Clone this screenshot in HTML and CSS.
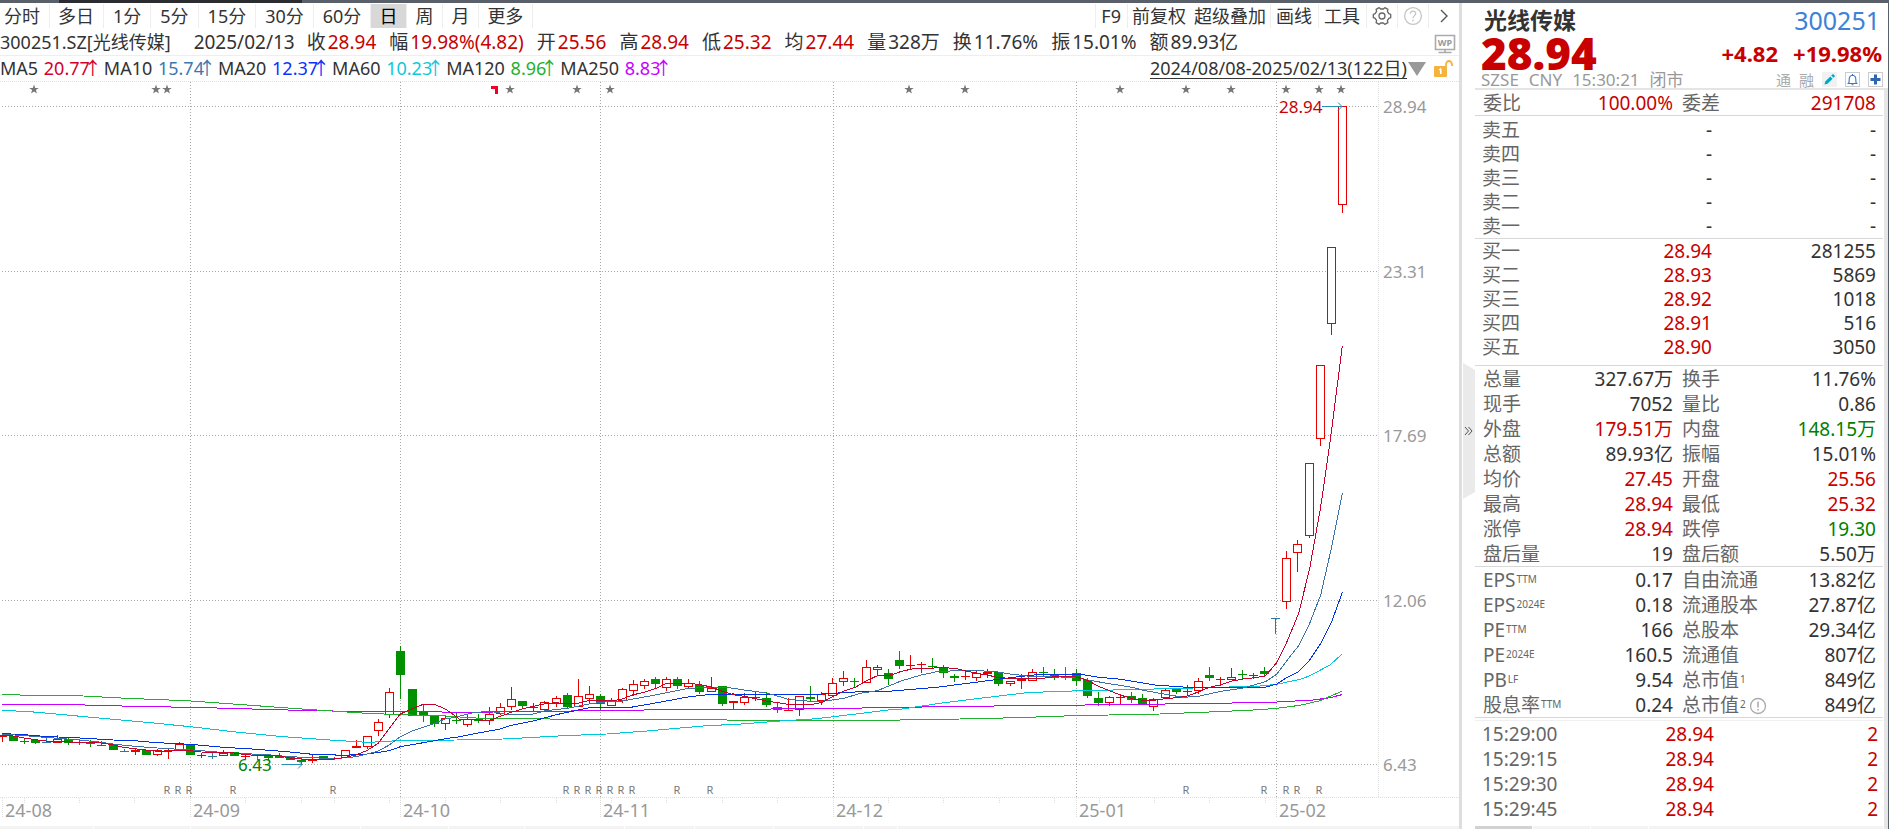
FILE: index.html
```html
<!DOCTYPE html>
<html lang="zh-CN">
<head>
<meta charset="utf-8">
<title>光线传媒 300251</title>
<link rel="stylesheet" href="styles.css">
</head>
<body>
<div class="topbar"><span class="topbar-tab"></span></div>
<div class="app">
  <main class="main">
    <nav class="toolbar">
      <div class="periods">
        <button class="tab">分时</button><button class="tab">多日</button><button class="tab wide">1分</button><button class="tab wide">5分</button><button class="tab wide">15分</button><button class="tab wide">30分</button><button class="tab wide">60分</button><button class="tab active">日</button><button class="tab">周</button><button class="tab">月</button><button class="tab">更多</button>
      </div>
      <div class="tools">
        <button class="tool">F9</button><button class="tool snug">前复权</button><button class="tool snug plain">超级叠加</button><button class="tool">画线</button><button class="tool">工具</button>
        <button class="tool icon" aria-label="设置"><svg width="20" height="20" viewBox="0 0 20 20" fill="none" stroke="#666" stroke-width="1.3" stroke-linejoin="round"><path d="M7.2 1.6 L8.6 3 H11.4 L12.8 1.6 L15.9 3.4 L15.4 5.4 L16.8 7.7 L18.7 8.3 V11.7 L16.8 12.3 L15.4 14.6 L15.9 16.6 L12.8 18.4 L11.4 17 H8.6 L7.2 18.4 L4.1 16.6 L4.6 14.6 L3.2 12.3 L1.3 11.7 V8.3 L3.2 7.7 L4.6 5.4 L4.1 3.4 Z"/><circle cx="10" cy="10" r="3"/></svg></button>
        <button class="tool icon" aria-label="帮助"><svg width="20" height="20" viewBox="0 0 20 20" fill="none" stroke="#c4c4c4" stroke-width="1.3"><circle cx="10" cy="10" r="8.4"/><path d="M7.3 7.8 C7.3 4.2 12.7 4.2 12.7 7.5 C12.7 9.7 10 9.6 10 12.2 M10 13.8 V15.4"/></svg></button>
        <button class="tool icon" aria-label="更多工具"><svg width="12" height="16" viewBox="0 0 12 16" fill="none" stroke="#555" stroke-width="1.4"><path d="M3 2 L9 8 L3 14"/></svg></button>
      </div>
    </nav>

    <div class="quote">
      <span class="sym">300251.SZ[光线传媒]</span>
      <span class="date">2025/02/13</span>
      <span class="pair">收<b class="up">28.94</b></span>
      <span class="pair">幅<b class="up">19.98%(4.82)</b></span>
      <span class="pair">开<b class="up">25.56</b></span>
      <span class="pair">高<b class="up">28.94</b></span>
      <span class="pair">低<b class="up">25.32</b></span>
      <span class="pair">均<b class="up">27.44</b></span>
      <span class="pair">量<b>328万</b></span>
      <span class="pair">换<b>11.76%</b></span>
      <span class="pair">振<b>15.01%</b></span>
      <span class="pair">额<b>89.93亿</b></span>
      <svg class="wp" width="22" height="20" viewBox="0 0 22 20"><path d="M1.500 1.500 H20.500 V15.500 H1.500 Z M11 15.500 V18 M4.500 18.500 H17.500" fill="none" stroke="#aaa" stroke-width="1.600"/><text x="11" y="12" text-anchor="middle" class="wp-text">WP</text></svg>
    </div>

    <div class="averages">
      <span class="ma">MA5 <b class="ma5">20.77<i>↑</i></b></span>
      <span class="ma">MA10 <b class="ma10">15.74<i>↑</i></b></span>
      <span class="ma">MA20 <b class="ma20">12.37<i>↑</i></b></span>
      <span class="ma">MA60 <b class="ma60">10.23<i>↑</i></b></span>
      <span class="ma">MA120 <b class="ma120">8.96<i>↑</i></b></span>
      <span class="ma">MA250 <b class="ma250">8.83<i>↑</i></b></span>
      <a class="range" href="#">2024/08/08-2025/02/13(122日)</a>
      <svg class="drop" width="18" height="16" viewBox="0 0 18 16"><path d="M0 1 H18 L9 15 Z" fill="#999"/></svg>
      <svg class="lock" width="20" height="18" viewBox="0 0 20 18"><rect x="0" y="6" width="13" height="11" rx="1" fill="#f5b23c"/><path d="M12 6 V4.500 A3 3.500 0 0 1 18 4.500 V6" fill="none" stroke="#f5b23c" stroke-width="1.800"/><path d="M5 9.500 H7 V14 M5.500 10 L6.500 9 V14" fill="none" stroke="#fff" stroke-width="1.200"/></svg>
    </div>

    <svg id="chart" class="chart" viewBox="0 81 1459 745" role="img" aria-label="日K线图"></svg>

    <div class="strip">
      <i class="s93"></i><i class="s96"></i><i class="s169"></i><i class="s87"></i><i class="s75"></i><i class="s99"></i><i class="s69"></i><i class="s78"></i><i class="s89"></i><i class="s33"></i><i class="rest"></i>
    </div>
  </main>

  <aside class="panel">
    <button class="handle" aria-label="收起"><svg width="12" height="136" viewBox="0 0 12 136"><path d="M0 0 L12 7 V129 L0 136 Z" fill="#eaeaea"/><path d="M2 64 L5.500 68 L2 72 M5.500 64 L9 68 L5.500 72" fill="none" stroke="#555"/></svg></button>
    <div class="content">
      <header class="head">
        <div class="row-name"><h1>光线传媒</h1><a class="code" href="#">300251</a></div>
        <div class="row-price"><strong class="price">28.94</strong><span class="chg">+4.82</span><span class="chg">+19.98%</span></div>
        <div class="row-meta">
          <span>SZSE</span><span>CNY</span><span>15:30:21</span><span>闭市</span>
          <span class="flags">
            <em>通</em><em>融</em>
            <button class="mini" aria-label="编辑"><svg width="15" height="15" viewBox="0 0 15 15"><rect width="15" height="15" fill="#f1f1f1"/><path d="M2.500 12.500 L3.200 9.500 L8.300 4.400 L10.600 6.700 L5.500 11.800 Z M9.200 3.500 L10.300 2.400 Q11 1.900 11.700 2.600 L12.400 3.300 Q13.100 4 12.600 4.700 L11.500 5.800 Z" fill="#00a8c8"/></svg></button>
            <button class="mini" aria-label="提醒"><svg width="15" height="15" viewBox="0 0 15 15"><rect x=".5" y=".5" width="14" height="14" fill="#fff" stroke="#ccc"/><path d="M2.500 11.500 H12.500 M3.700 11.300 Q4.300 9.800 4.200 7 Q4.300 3.600 7.500 3.200 Q10.700 3.600 10.800 7 Q10.700 9.800 11.300 11.300 M6.500 12.800 H8.500 M7.500 2 V3.200" fill="none" stroke="#3c78c8" stroke-width="1.100"/></svg></button>
            <button class="mini" aria-label="添加"><svg width="15" height="15" viewBox="0 0 15 15"><rect x=".5" y=".5" width="14" height="14" fill="#fff" stroke="#ccc"/><path d="M7.500 2.500 V12.500 M2.500 7.500 H12.500" stroke="#2f66b4" stroke-width="3"/></svg></button>
          </span>
        </div>
      </header>
      <div class="below">
      <div class="tables">
        <table class="stats">
          <tr><th>委比</th><td class="up">100.00%</td><th>委差</th><td class="up">291708</td></tr>
        </table>
        <table class="book asks">
          <tr><th>卖五</th><td>-</td><td>-</td></tr>
          <tr><th>卖四</th><td>-</td><td>-</td></tr>
          <tr><th>卖三</th><td>-</td><td>-</td></tr>
          <tr><th>卖二</th><td>-</td><td>-</td></tr>
          <tr><th>卖一</th><td>-</td><td>-</td></tr>
        </table>
        <table class="book bids">
          <tr><th>买一</th><td class="up">28.94</td><td>281255</td></tr>
          <tr><th>买二</th><td class="up">28.93</td><td>5869</td></tr>
          <tr><th>买三</th><td class="up">28.92</td><td>1018</td></tr>
          <tr><th>买四</th><td class="up">28.91</td><td>516</td></tr>
          <tr><th>买五</th><td class="up">28.90</td><td>3050</td></tr>
        </table>
        <table class="stats">
          <tr><th>总量</th><td>327.67万</td><th>换手</th><td>11.76%</td></tr>
          <tr><th>现手</th><td>7052</td><th>量比</th><td>0.86</td></tr>
          <tr><th>外盘</th><td class="up">179.51万</td><th>内盘</th><td class="down">148.15万</td></tr>
          <tr><th>总额</th><td>89.93亿</td><th>振幅</th><td>15.01%</td></tr>
          <tr><th>均价</th><td class="up">27.45</td><th>开盘</th><td class="up">25.56</td></tr>
          <tr><th>最高</th><td class="up">28.94</td><th>最低</th><td class="up">25.32</td></tr>
          <tr><th>涨停</th><td class="up">28.94</td><th>跌停</th><td class="down">19.30</td></tr>
          <tr><th>盘后量</th><td>19</td><th>盘后额</th><td>5.50万</td></tr>
        </table>
        <table class="stats">
          <tr><th>EPS<small>TTM</small></th><td>0.17</td><th>自由流通</th><td>13.82亿</td></tr>
          <tr><th>EPS<small>2024E</small></th><td>0.18</td><th>流通股本</th><td>27.87亿</td></tr>
          <tr><th>PE<small>TTM</small></th><td>166</td><th>总股本</th><td>29.34亿</td></tr>
          <tr><th>PE<small>2024E</small></th><td>160.5</td><th>流通值</th><td>807亿</td></tr>
          <tr><th>PB<small>LF</small></th><td>9.54</td><th>总市值<small>1</small></th><td>849亿</td></tr>
          <tr><th>股息率<small>TTM</small></th><td>0.24</td><th>总市值<small>2</small><svg class="info" width="18" height="18" viewBox="0 0 18 18"><circle cx="9" cy="9" r="7.500" fill="none" stroke="#aaa" stroke-width="1.300"/><path d="M9 4.500 V10.500 M9 12 V13.600" stroke="#aaa" stroke-width="1.500"/></svg></th><td>849亿</td></tr>
        </table>
        <table class="book trades">
          <tr><th>15:29:00</th><td class="up">28.94</td><td class="up">2</td></tr>
          <tr><th>15:29:15</th><td class="up">28.94</td><td class="up">2</td></tr>
          <tr><th>15:29:30</th><td class="up">28.94</td><td class="up">2</td></tr>
          <tr><th>15:29:45</th><td class="up">28.94</td><td class="up">2</td></tr>
        </table>
        <div class="strip"><i class="on s57"></i><i class="s57"></i><i class="s57"></i><i class="rest"></i></div>
      </div>
      <div class="scroll"></div>
      </div>
    </div>
  </aside>
</div>
<script src="chart.js"></script>
</body>
</html>
```

FILE: styles.css
```css
* { box-sizing: border-box; }

body {
  margin: 0;
  min-height: 100vh;
  display: flex;
  flex-direction: column;
  background: #fff;
  color: #333;
  font-family: "Noto Sans", "Noto Sans CJK SC", sans-serif;
  font-size: 19px;
  overflow: hidden;
}

button {
  margin: 0;
  padding: 0;
  border: 0;
  background: none;
  color: inherit;
  font: inherit;
}

b, i, em { font-weight: normal; font-style: normal; }
svg { display: block; flex: none; }

.topbar { height: 3px; background: #5a606a; padding-left: 59px; }
.topbar-tab { display: block; width: 243px; height: 3px; background: #2a2c30; }

.app { flex: 1; display: flex; border-right: 1px solid #5a606a; }
.main { flex: 1; min-width: 0; display: flex; flex-direction: column; }

.toolbar { display: flex; justify-content: space-between; height: 27px; padding: 1px 0 2px; font-size: 18px; line-height: 24px; }
.periods, .tools { display: flex; }
.tab { padding: 0 9px 0 8px; border-right: 1px solid #eee; white-space: nowrap; }
.tab:first-child { padding-left: 4px; }
.tab.wide { padding-left: 9px; }
.tab.active { background: #d8d8d8; color: #000; }
.tool { padding: 0 6px 0 5px; border-left: 1px solid #eee; white-space: nowrap; }
.tool.snug { padding: 0 4px; }
.tool.plain { border-left: 0; }
.tool.icon { width: 31px; padding: 0; display: flex; align-items: center; justify-content: center; }

.quote { display: flex; align-items: center; height: 26px; line-height: 25px; border-bottom: 1px solid #eee; white-space: nowrap; }
.sym { margin-right: 23px; font-size: 18px; }
.date { margin-right: 12px; }
.pair { display: flex; gap: 2px; margin-right: 13px; }
.wp { margin: 2px 3px 0 auto; }
.wp-text { font-size: 9px; font-weight: bold; fill: #999; }

.averages { display: flex; align-items: center; height: 25px; font-size: 18px; line-height: 25px; white-space: nowrap; }
.ma { margin-right: 9px; }
.ma b { margin-left: 1px; }
.ma i { display: inline-block; width: 5px; font-family: "Noto Sans CJK SC", sans-serif; line-height: 18px; text-indent: -6px; }
.ma5 { color: #d4002c; }
.ma10 { color: #3a78b0; }
.ma20 { color: #0a32ff; }
.ma60 { color: #10c8dc; }
.ma120 { color: #22b030; }
.ma250 { color: #c800ff; }
.range { margin-left: auto; color: #333; text-decoration: underline; text-underline-offset: 3px; }
.drop { margin-left: 1px; }
.lock { margin: 0 5px 0 8px; }

.chart { width: 100%; height: auto; }
.chart text { font-size: 18px; fill: #999; }
.chart .price-label { font-size: 17px; }
.chart .mark { font-size: 11px; fill: #777; text-anchor: middle; }
.chart .high { font-size: 17px; fill: #c80000; }
.chart .low { font-size: 17px; fill: #008000; }
.grid { stroke: #a8a8a8; stroke-dasharray: 1 2; shape-rendering: crispEdges; }
.frame { stroke: #dedede; stroke-dasharray: 1 1; shape-rendering: crispEdges; }
.line { fill: none; shape-rendering: crispEdges; }
.line.ma5 { stroke: #c8002c; }
.line.ma10 { stroke: #3a72a8; }
.line.ma20 { stroke: #0032e6; }
.line.ma60 { stroke: #00c8dc; }
.line.ma120 { stroke: #22b030; }
.line.ma250 { stroke: #c800ff; }
.candle { shape-rendering: crispEdges; }
.candle.r { stroke: #e60000; fill: #fff; }
.candle.g { stroke: #009000; fill: #009000; }
.candle.b { stroke: #2878a0; fill: #2878a0; }
.star { fill: #777; }
.flag { fill: #f00028; }
.pointer { fill: none; stroke: #2890b8; }
.blank { fill: #fff; }

.strip { display: flex; gap: 1px; height: 3px; margin-top: auto; }
.strip i { height: 3px; background: #f3f3f3; }
.s93 { width: 93px; } .s96 { width: 96px; } .s169 { width: 169px; } .s87 { width: 87px; }
.s75 { width: 75px; } .s99 { width: 99px; } .s69 { width: 69px; } .s78 { width: 78px; }
.s89 { width: 89px; } .s33 { width: 33px; } .s57 { width: 57px; }
.strip .rest { flex: 1; }
.strip .on { background: #d2d2d2; }

.panel { width: 429px; flex: none; display: flex; border-left: 3px solid #dedede; }
.handle { width: 13px; padding-left: 1px; margin-top: 360px; align-self: flex-start; }
.content { flex: 1; display: flex; flex-direction: column; }
.head { height: 87px; border-bottom: 2px solid #e4e4e4; }
.row-name { display: flex; justify-content: space-between; align-items: center; height: 34px; padding: 0 8px 0 9px; }
h1 { margin: 0; font-size: 23px; line-height: 34px; }
.code { font-size: 25px; line-height: 34px; color: #3c82d6; text-decoration: none; }
.row-price { display: flex; align-items: center; height: 32px; padding: 0 6px; color: #c80000; font-weight: bold; font-size: 22px; line-height: 32px; gap: 15px; }
.price { flex: 1; font-size: 44px; }
.row-meta { display: flex; align-items: center; height: 21px; padding: 0 5px 0 6px; gap: 10px; font-size: 17px; line-height: 20px; color: #999; }
.flags { margin-left: auto; display: flex; align-items: center; gap: 8px; font-size: 15px; color: #aaa; }

.below { flex: 1; display: flex; }
.tables { flex: 1; display: flex; flex-direction: column; }
.scroll { width: 5px; border-left: 1px solid #fff; background: #e6e6e6; }

table { width: 100%; border-collapse: separate; border-spacing: 0; table-layout: fixed; }
th, td { padding: 0; line-height: 24px; white-space: nowrap; }
th { font-weight: normal; text-align: left; color: #666; }
td { text-align: right; }
.stats, .asks, .bids { border-bottom: 1px solid #d8d8d8; }
.stats th, .stats td { height: 25px; }
.stats th:nth-child(1) { width: 98px; padding-left: 8px; }
.stats th:nth-child(3) { width: 105px; padding-left: 9px; }
.stats td:nth-child(2) { width: 100px; }
.stats td:nth-child(4) { padding-right: 7px; }
.book th, .book td { height: 24px; }
.book th { width: 98px; padding-left: 7px; }
.book td:nth-child(2) { width: 139px; }
.book td:nth-child(3) { padding-right: 7px; }
.asks { padding-top: 2px; }
.bids { padding-bottom: 6px; }
.trades { margin-top: 2px; border-top: 1px solid #f0f0f0; }
.trades th, .trades td { height: 25px; }
.trades td:nth-child(2) { width: 141px; }
.trades td:nth-child(3) { padding-right: 5px; }
small { margin-left: 1px; font-size: 10px; vertical-align: 4px; line-height: 10px; }
.info { display: inline-block; vertical-align: -3px; margin-left: 3px; }
.up { color: #c80000; }
.down { color: #008000; }
```

FILE: chart.js
```js
const svg = document.getElementById('chart');
const NS = 'http://www.w3.org/2000/svg';

function add(tag, attrs, text) {
  const el = document.createElementNS(NS, tag);
  for (const key in attrs) el.setAttribute(key, attrs[key]);
  if (text) el.textContent = text;
  svg.appendChild(el);
  return el;
}

const xOf = i => Math.round(1.8 + 11.074 * i) + 0.5;

// kind, high, body top, body bottom, low
const candles = `r 734 735 736 741|g 736 736 740 740|g 739 741 741 743|g 739 740 742 743|b 737 742 742 742|r 735 739 742 742
g 737 739 742 744|g 740 742 742 744|g 740 743 743 746|g 741 745 745 745|g 745 745 749 749|b 749 751 751 751
r 748 750 751 754|g 750 750 754 754|r 749 750 754 755|r 749 750 750 758|r 742 744 750 750|g 745 745 754 754
r 753 755 755 757|b 753 756 756 758|r 750 753 755 755|g 752 752 755 755|r 754 756 756 758|b 754 755 755 759
g 755 755 757 759|g 753 756 757 757|g 757 757 759 759|g 758 760 761 764|r 755 759 760 762|g 756 756 757 757
g 757 758 758 759|r 750 750 757 757|r 740 746 747 747|r 736 736 746 748|r 719 722 730 735|r 688 692 714 717
g 646 651 674 698|g 689 689 715 715|g 704 711 715 721|g 715 715 723 726|r 716 718 723 729|g 713 720 720 723
r 714 719 724 726|g 714 719 720 722|r 707 714 720 724|r 703 707 713 714|r 687 699 706 709|g 701 701 705 707
r 703 707 707 710|r 701 702 709 709|r 696 698 703 706|g 693 695 706 707|r 679 696 706 706|r 686 694 698 702
g 694 696 703 709|r 698 701 705 705|r 688 689 700 702|r 680 684 690 695|r 679 681 685 688|g 677 679 683 687
r 677 679 687 690|g 677 679 685 688|r 679 683 686 688|g 681 685 691 693|r 677 688 691 691|g 686 686 703 705
r 701 701 702 708|r 693 697 702 704|r 691 697 697 700|g 692 698 704 706|g 703 707 709 712|r 698 710 710 710
r 696 696 709 715|g 686 697 698 700|r 692 694 700 704|r 678 683 695 696|r 671 678 681 685|g 678 681 681 687
r 660 667 682 682|r 665 667 669 675|g 669 673 678 684|g 651 660 665 668|r 655 665 665 669|r 662 664 664 672
g 658 666 666 668|g 665 667 672 677|g 674 676 677 681|r 671 676 676 679|r 671 673 677 680|r 669 672 673 677
g 672 672 683 685|r 681 681 683 685|r 674 679 680 688|r 669 672 680 680|g 667 672 672 675|g 669 675 677 679
b 667 676 677 679|g 669 673 680 685|g 678 680 695 697|g 692 698 702 705|r 696 697 702 705|r 694 697 697 704
g 692 696 699 702|g 694 698 703 704|r 698 699 706 710|r 689 690 697 697|g 689 689 691 693|r 685 691 691 694
r 678 681 690 693|g 667 675 677 680|r 677 679 679 685|r 668 677 679 679|g 670 674 674 678|r 673 675 675 678
g 667 671 673 676|b 618 618 618 633|r 551 558 601 608|r 540 544 552 571|r 463 463 535 537|r 365 365 438 445
r 247 247 323 334|r 106 106 204 212`.split(/[|\n]/).map(s => s.trim().split(' '));

// Each section is an origin followed by points in thirds of a unit from it.
const averages = {
  ma250: ['0 630: 7 223 220 224 400 229 560 232 690 235 820 239 1000 243 1201 244 1380 247',
    '460 640: 0 217 200 215 470 211 640 209 800 208 1070 206 1270 203',
    '900 630: 0 232 350 227 650 224 945 220 1115 217 1240 210 1290 203 1325 194'],
  ma120: ['0 630: 7 193 110 197 250 198 380 205 560 212 700 222 850 233 950 240 1100 250 1201 254 1370 259',
    '460 640: 0 231 80 236 270 237 430 240 540 239 800 240 1100 241',
    '900 630: 0 270 180 267 350 263 520 257 780 252 950 245 1080 239 1130 235 1200 226 1260 212 1325 184'],
  ma60: ['0 630: 7 241 90 245 190 254 320 266 440 277 571 290 700 305 850 320 1003 331 1100 337 1150 335 1201 331 1370 330',
    '460 640: 0 299 130 297 205 293 310 287 440 282 560 273 650 265 740 257 830 253 960 243 1070 236 1130 229 1220 218 1300 208',
    '900 630: 0 238 120 220 240 205 380 188 480 184 640 180 800 176 960 172 1080 168 1130 163 1200 148 1228 138 1290 105 1325 73'],
  ma20: ['0 630: 7 311 60 313 130 319 240 324 340 330 403 332 472 338 571 343 670 352 770 358 871 366 937 373 1036 376 1102 372 1168 362 1201 350 1270 338 1336 326',
    '460 640: 0 290 55 279 121 267 154 256 220 243 289 224 355 210 388 203 454 203 500 204 553 195 619 183 688 170 754 163 820 162 1040 165 1100 161 1186 156 1285 154',
    '900 630: 0 181 110 172 240 155 331 143 410 134 540 133 598 142 664 148 764 165 862 172 928 173 1096 172 1130 162 1162 142 1195 125 1228 92',
    '1250 440: 212 610 245 545 277 457'],
  ma10: ['0 630: 7 313 60 316 172 325 240 330 304 337 340 342 403 349 472 354 538 358 604 362 660 367 736 371 802 374 871 380 937 383 1003 386 1069 380 1102 372 1135 363 1168 345 1201 320 1237 303 1303 281 1336 266 1369 262',
    '460 640: 0 228 40 218 88 214 121 219 150 225 187 224 220 222 256 212 322 205 388 192 421 187 487 183 520 177 586 165 655 151 688 145 754 142 800 142 853 150 919 159 952 168 985 178 1051 184 1087 184 1153 175 1200 160 1252 152 1318 125',
    '900 630: 0 154 60 136 110 125 190 121 280 124 331 132 380 138 529 142 565 150 620 160 697 172 730 181 796 193 850 202 895 199 964 184 1030 174 1096 155',
    '1250 440: 80 703 112 660 146 617 179 550 212 465 245 320 277 160'],
  ma5: ['0 630: 7 316 40 318 73 324 106 329 139 333 172 335 238 337 304 339 337 344 370 352 403 356 439 360 472 364 505 364 538 361 571 362 604 366 637 367 703 369 736 374 769 376 840 378 871 384 904 387 970 389 1003 387 1036 382 1069 375 1102 361 1135 340 1168 295 1201 252 1237 236 1270 223 1303 223 1336 237 1369 260',
    '460 640: 0 239 55 240 88 241 121 229 154 217 187 207 220 199 256 191 289 188 322 192 355 190 388 181 421 181 454 183 487 177 520 164 553 157 586 146 619 130 688 130 721 134 754 141 787 154 820 164 853 169 886 176 919 183 985 193 1051 194 1087 187 1120 169 1153 153 1186 142 1219 123 1252 107 1285 107 1318 97',
    '900 630: 0 125 40 116 130 113 166 115 199 123 232 130 265 136 298 143 331 145 430 145 463 140 496 138 529 141 565 152 598 170 631 183 664 196 697 206 730 211 763 211 796 206 829 203 862 198 895 186 928 172 964 164 997 153 1030 147 1063 143 1096 138',
    '1250 440: 80 668 112 603 146 520 179 385 212 200 241 0 277 -282']
};

const prices = [['28.94', 106.5], ['23.31', 271.5], ['17.69', 435.5], ['12.06', 600.5], ['6.43', 764.5]];
const months = [['24-08', 2.5], ['24-09', 190.5], ['24-10', 400.5], ['24-11', 600.5], ['24-12', 833.5], ['25-01', 1076.5], ['25-02', 1276.5]];
const ticks = [24, 79, 134, 245, 301, 334, 389, 445, 500, 556, 611, 666, 722, 777, 888, 943, 999, 1054, 1099, 1154, 1209, 1265, 1309];
const stars = [34, 156, 167, 510, 577, 610, 909, 965, 1120, 1186, 1231, 1286, 1319, 1341];
const reports = [167, 178, 189, 233, 333, 566, 577, 588, 599, 610, 621, 632, 677, 710, 1186, 1264, 1286, 1297, 1319];

add('path', { class: 'frame', d: 'M0 81.5H1459M0 797.5H1459M1378.5 82V798' });
for (const x of ticks) add('path', { class: 'frame', d: `M${x + 0.5} 798V803` });
for (const [label, y] of prices) {
  add('path', { class: 'grid', d: `M2 ${y}H1378` });
  add('text', { class: 'price-label', x: 1383, y: y + 6.5 }, label);
}
months.forEach(([label, x], n) => {
  if (n) add('path', { class: 'grid', d: `M${x} 82V798` });
  add('path', { class: 'frame', d: `M${x} 798V818` });
  add('text', { x: x + 2.5, y: 817 }, label);
});

candles.forEach(([kind, ...v], i) => {
  const [high, top, bottom, low] = v.map(n => +n + 0.5);
  const x = xOf(i);
  const left = Math.max(x - 4, 0);
  let d = `M${x} ${high - 0.5}V${top}M${x} ${bottom}V${low + 0.5}`;
  d += top === bottom ? `M${left - 0.5} ${top}H${x + 4.5}` : `M${left} ${top}H${x + 4}V${bottom}H${left}Z`;
  add('path', { class: 'candle ' + kind, d });
});

for (const name in averages) {
  const points = averages[name].flatMap(section => {
    const [origin, list] = section.split(': ');
    const [ox, oy] = origin.split(' ').map(Number);
    const n = list.split(' ').map(Number);
    const out = [];
    for (let k = 0; k < n.length; k += 2) out.push((ox + n[k] / 3).toFixed(1) + ',' + (oy + n[k + 1] / 3).toFixed(1));
    return out;
  });
  add('polyline', { class: 'line ' + name, points: points.join(' ') });
}

for (const x of stars) {
  let d = '';
  for (let k = 0; k < 10; k++) {
    const r = k % 2 ? 2 : 5, a = Math.PI * k / 5;
    d += (k ? 'L' : 'M') + (x + r * Math.sin(a)).toFixed(2) + ' ' + (89.5 - r * Math.cos(a)).toFixed(2);
  }
  add('path', { class: 'star', d: d + 'Z' });
}
add('path', { class: 'flag', d: 'M491 86H498V94H495V89H491Z' });
for (const x of reports) add('text', { class: 'mark', x, y: 794 }, 'R');

add('rect', { class: 'blank', x: 1279, y: 99, width: 43, height: 15 });
add('text', { class: 'high', x: 1279, y: 113 }, '28.94');
add('path', { class: 'pointer', d: 'M1322 106.5H1342M1338 102.5L1342 106.5L1338 110.5' });
add('text', { class: 'low', x: 238, y: 771 }, '6.43');
add('path', { class: 'pointer', d: 'M282 764.5H302M298 760.5L302 764.5L298 768.5' });
```
